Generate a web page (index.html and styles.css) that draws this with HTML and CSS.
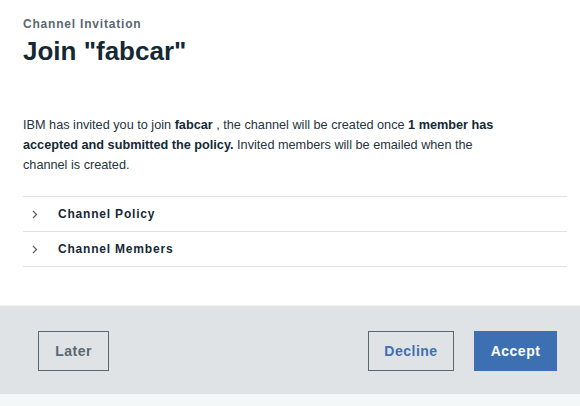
FILE: index.html
```html
<!DOCTYPE html>
<html>
<head>
<meta charset="utf-8">
<link rel="stylesheet" href="styles.css">
</head>
<body>
<div class="modal">
  <div class="header">
    <div class="label">Channel Invitation</div>
    <h1 class="title">Join "fabcar"</h1>
  </div>
  <div class="content">
    <p class="text">IBM has invited you to join <b>fabcar</b> , the channel will be created once <b>1 member has accepted and submitted the policy.</b> Invited members will be emailed when the channel is created.</p>
    <ul class="accordion">
      <li class="acc-item">
        <svg class="chev" width="6" height="9" viewBox="0 0 6 9"><path d="M1 1 L4.5 4.5 L1 8" fill="none" stroke="#5a6872" stroke-width="1.3"/></svg>
        <span class="acc-title">Channel Policy</span>
      </li>
      <li class="acc-item">
        <svg class="chev" width="6" height="9" viewBox="0 0 6 9"><path d="M1 1 L4.5 4.5 L1 8" fill="none" stroke="#5a6872" stroke-width="1.3"/></svg>
        <span class="acc-title">Channel Members</span>
      </li>
    </ul>
  </div>
  <div class="footer">
    <button class="btn btn-later">Later</button>
    <div class="spacer"></div>
    <button class="btn btn-decline">Decline</button>
    <button class="btn btn-accept">Accept</button>
  </div>
  <div class="bottom"></div>
</div>
</body>
</html>
```
FILE: styles.css
```css
html, body {
  margin: 0;
  padding: 0;
  background: #ffffff;
}
body {
  font-family: "Liberation Sans", Arial, sans-serif;
  color: #152935;
}
.modal {
  width: 580px;
  height: 406px;
  display: flex;
  flex-direction: column;
  background: #ffffff;
}
.header {
  padding: 17px 23px 0;
}
.label {
  font-size: 12px;
  line-height: 14px;
  font-weight: bold;
  letter-spacing: 0.8px;
  color: #5a6872;
}
.title {
  margin: 5px 0 0;
  font-size: 26px;
  line-height: 30px;
  font-weight: bold;
  color: #152935;
}
.content {
  padding: 0 13px 0 23px;
}
.text {
  margin: 49px 0 0;
  font-size: 12.7px;
  line-height: 20px;
  color: #26343d;
  width: 480px;
}
.text b {
  color: #152935;
}
.accordion {
  list-style: none;
  margin: 21px 0 0;
  padding: 0;
  border-top: 1px solid #dfe3e6;
}
.acc-item {
  height: 34px;
  border-bottom: 1px solid #dfe3e6;
  display: flex;
  align-items: center;
}
.chev {
  margin-left: 9px;
  margin-right: 20px;
}
.acc-title {
  font-size: 12px;
  font-weight: bold;
  letter-spacing: 0.8px;
  color: #152935;
}
.footer {
  margin-top: 38px;
  border-top: 1px solid #f1f3f4;
  background: #dfe3e6;
  height: 89px;
  box-sizing: border-box;
  padding: 25px 23px 0 38px;
  display: flex;
  align-items: flex-start;
  gap: 20px;
}
.spacer {
  flex: 1;
}
.btn {
  font-family: "Liberation Sans", Arial, sans-serif;
  font-size: 14px;
  font-weight: bold;
  letter-spacing: 0.5px;
  height: 40px;
  box-sizing: border-box;
  padding: 0;
  cursor: pointer;
}
.btn-later {
  width: 71px;
  background: transparent;
  border: 1px solid #5a6872;
  color: #5a6872;
}
.btn-decline {
  width: 86px;
  background: transparent;
  border: 1px solid #5a6872;
  color: #3d70b2;
}
.btn-accept {
  width: 83px;
  background: #3d70b2;
  border: 1px solid #3d70b2;
  color: #ffffff;
}
.bottom {
  flex: 1;
  background: #f4f7f8;
}
```
